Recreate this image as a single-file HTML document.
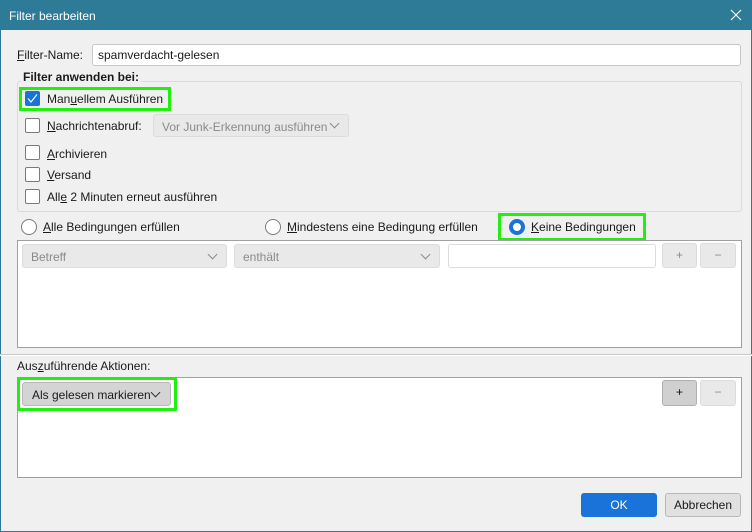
<!DOCTYPE html>
<html><head><meta charset="utf-8"><style>
*{box-sizing:border-box;margin:0;padding:0}
body{width:752px;height:532px;background:#f0f0f0;font-family:"Liberation Sans",sans-serif;font-size:12px;color:#1a1a1a;position:relative;overflow:hidden}
.a{position:absolute}
.win{left:0;top:0;width:752px;height:532px;border:1px solid #2e7b98;border-top:none}
.title{left:0;top:0;width:752px;height:30px;background:#2e7b98;color:#fff;font-size:12px;padding:9px 0 0 9px}
.t{position:absolute;white-space:nowrap;line-height:15px}
.cb{position:absolute;width:15px;height:15px;border:1px solid #7a7a7a;background:#fff;border-radius:2px}
.rd{position:absolute;width:16px;height:16px;border:1px solid #7a7a7a;background:#fff;border-radius:50%}
.sel{position:absolute;border:1px solid #dcdcdc;background:#e9e9e9;border-radius:3px;color:#8a8a8a;padding:5px 8px}
.chev{position:absolute;right:10px;top:6px;width:7px;height:7px;border-right:1px solid #8a8a8a;border-bottom:1px solid #8a8a8a;transform:rotate(45deg)}
.box{position:absolute;background:#fff;border:1px solid #a0a0a0}
.btn{position:absolute;border:1px solid #dcdcdc;background:#e9e9e9;border-radius:3px;text-align:center;color:#8a8a8a;line-height:22px}
.g{position:absolute;border:3px solid #22ee11}
u{text-decoration:underline}
</style></head><body>
<div class="a win"></div>
<div class="a title">Filter bearbeiten</div>
<svg class="a" style="left:730px;top:9px" width="12" height="12"><path d="M1 1L11 11M11 1L1 11" stroke="#fff" stroke-width="1.2"/></svg>

<div class="t" style="left:17px;top:48px"><u>F</u>ilter-Name:</div>
<div class="a" style="left:92px;top:44px;width:649px;height:22px;background:#fff;border:1px solid #c8c8c8;border-radius:3px;padding:3px 5px">spamverdacht-gelesen</div>

<div class="a" style="left:17px;top:81px;width:725px;height:131px;border:1px solid #dadada;border-radius:3px"></div>
<div class="t" style="left:21px;top:70px;font-weight:bold;background:#f0f0f0;padding:0 2px">Filter anwenden bei:</div>

<div class="g" style="left:19px;top:87px;width:152px;height:24px"></div>
<div class="cb" style="left:25px;top:91px;background:#1a73d9;border-color:#1a73d9"></div>
<svg class="a" style="left:25px;top:91px" width="15" height="15"><path d="M3 7.5L6 11L12 3.5" stroke="#fff" stroke-width="1.2" fill="none"/></svg>
<div class="t" style="left:47px;top:92px">Man<u>u</u>ellem Ausführen</div>

<div class="cb" style="left:25px;top:118px"></div>
<div class="t" style="left:47px;top:119px"><u>N</u>achrichtenabruf:</div>
<div class="sel" style="left:153px;top:114px;width:196px;height:23px;padding-left:8px">Vor Junk-Erkennung ausführen<span class="chev" style="top:5px"></span></div>

<div class="cb" style="left:25px;top:145px"></div>
<div class="t" style="left:47px;top:147px"><u>A</u>rchivieren</div>
<div class="cb" style="left:25px;top:167px"></div>
<div class="t" style="left:47px;top:168px"><u>V</u>ersand</div>
<div class="cb" style="left:25px;top:189px"></div>
<div class="t" style="left:47px;top:190px">All<u>e</u> 2 Minuten erneut ausführen</div>

<div class="rd" style="left:21px;top:219px"></div>
<div class="t" style="left:43px;top:220px"><u>A</u>lle Bedingungen erfüllen</div>
<div class="rd" style="left:265px;top:219px"></div>
<div class="t" style="left:287px;top:220px"><u>M</u>indestens eine Bedingung erfüllen</div>
<div class="g" style="left:498px;top:213px;width:148px;height:28px"></div>
<div class="rd" style="left:509px;top:219px;border:4px solid #1a73d9"></div>
<div class="t" style="left:531px;top:220px"><u>K</u>eine Bedingungen</div>

<div class="box" style="left:17px;top:240px;width:725px;height:108px"></div>
<div class="sel" style="left:22px;top:244px;width:205px;height:24px">Betreff<span class="chev"></span></div>
<div class="sel" style="left:234px;top:244px;width:206px;height:24px">enthält<span class="chev"></span></div>
<div class="a" style="left:448px;top:244px;width:208px;height:24px;background:#fff;border:1px solid #dcdcdc;border-radius:3px"></div>
<div class="btn" style="left:662px;top:243px;width:35px;height:25px">+</div>
<div class="btn" style="left:700px;top:243px;width:36px;height:25px">−</div>

<div class="a" style="left:0;top:354px;width:752px;height:1px;background:#c8c8c8"></div>
<div class="a" style="left:0;top:355px;width:752px;height:1px;background:#fff"></div>
<div class="t" style="left:17px;top:359px">Aus<u>z</u>uführende Aktionen:</div>

<div class="box" style="left:17px;top:377px;width:725px;height:101px"></div>
<div class="g" style="left:17px;top:377px;width:160px;height:34px"></div>
<div class="a" style="left:22px;top:382px;width:149px;height:24px;background:#d4d4d4;border:1px solid #b8b8b8;border-radius:3px;padding:5px 9px;color:#1a1a1a">Als gelesen markieren<span class="chev" style="border-color:#333;right:11px"></span></div>
<div class="btn" style="left:662px;top:380px;width:35px;height:26px;background:#d0d0d0;border-color:#b0b0b0;color:#111">+</div>
<div class="btn" style="left:700px;top:380px;width:36px;height:26px">−</div>

<div class="a" style="left:581px;top:493px;width:76px;height:24px;background:#1a73d9;border-radius:3px;color:#fff;text-align:center;line-height:24px">OK</div>
<div class="a" style="left:665px;top:493px;width:76px;height:24px;background:#e1e1e1;border:1px solid #b8b8b8;border-radius:3px;text-align:center;line-height:22px">Abbrechen</div>
</body></html>
